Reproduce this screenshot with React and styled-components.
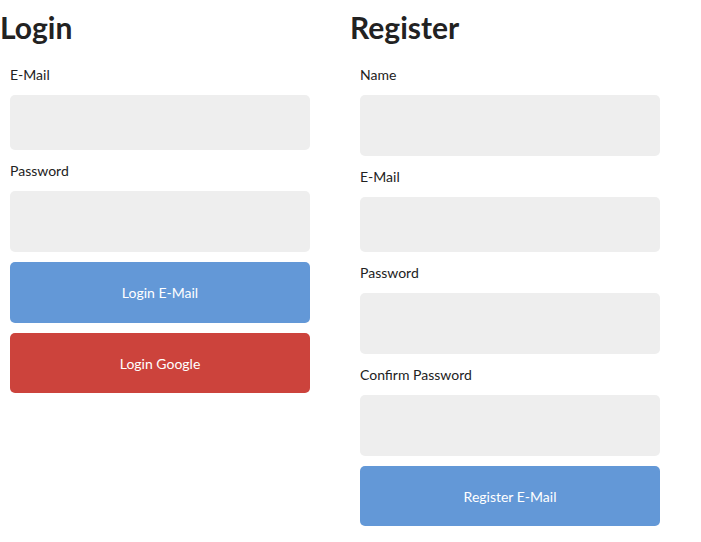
import React from 'react';
import styled, { createGlobalStyle } from 'styled-components';

const GlobalStyle = createGlobalStyle`
  html, body {
    margin: 0;
    padding: 0;
    background: #fff;
  }
  body {
    font-family: Lato, "Open Sans", sans-serif;
    color: #222;
  }
`;

const Page = styled.div`
  display: flex;
  width: 701px;
`;

const Column = styled.section`
  width: 350px;
  padding-top: 9px;
`;

const Title = styled.h1`
  margin: 0 0 21px;
  font-size: 30px;
  font-weight: 700;
  line-height: 36px;
  color: #222;
`;

const Form = styled.form`
  display: flex;
  flex-direction: column;
  width: 300px;
  margin-left: 10px;
`;

const Label = styled.label`
  font-size: 14px;
  line-height: 18px;
  margin-bottom: 11px;
`;

const Input = styled.input`
  box-sizing: border-box;
  height: ${(p) => p.$h || 61}px;
  margin-bottom: ${(p) => (p.$last ? 10 : 12)}px;
  border: none;
  border-radius: 5px;
  background: #eee;
  outline: none;
`;

const Button = styled.button`
  height: ${(p) => p.$h || 61}px;
  margin-bottom: 10px;
  border: none;
  border-radius: 5px;
  background: ${(p) => (p.$google ? '#cc433c' : '#6398d7')};
  color: #fff;
  font-family: Lato, sans-serif;
  font-size: 14px;
  cursor: pointer;
`;

export default function App() {
  return (
    <>
      <GlobalStyle />
      <Page>
        <Column>
          <Title>Login</Title>
          <Form onSubmit={(e) => e.preventDefault()}>
            <Label>E-Mail</Label>
            <Input type="email" $h={55} />
            <Label>Password</Label>
            <Input type="password" $last />
            <Button type="submit">Login E-Mail</Button>
            <Button type="button" $google $h={60}>Login Google</Button>
          </Form>
        </Column>
        <Column>
          <Title>Register</Title>
          <Form onSubmit={(e) => e.preventDefault()}>
            <Label>Name</Label>
            <Input type="text" />
            <Label>E-Mail</Label>
            <Input type="email" $h={55} />
            <Label>Password</Label>
            <Input type="password" />
            <Label>Confirm Password</Label>
            <Input type="password" $last />
            <Button type="submit" $h={60}>Register E-Mail</Button>
          </Form>
        </Column>
      </Page>
    </>
  );
}
